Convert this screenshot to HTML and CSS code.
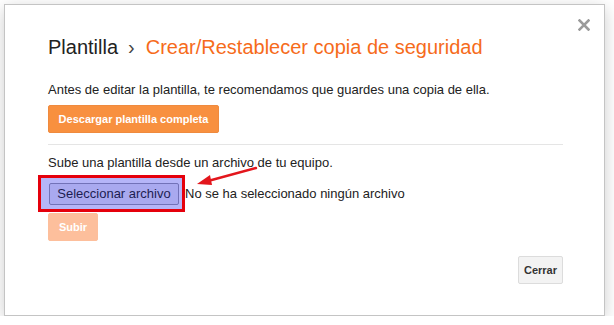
FILE: index.html
```html
<!DOCTYPE html>
<html lang="es">
<head>
    <meta charset="UTF-8">
    <title>Plantilla - Copia de seguridad</title>
    <link rel="stylesheet" href="styles.css">
</head>
<body>
    <div class="dialog">
        <svg class="close" width="12" height="12" viewBox="0 0 12 12">
            <path d="M1.5 1.5 L10.5 10.5 M10.5 1.5 L1.5 10.5" stroke="#9a9a9a" stroke-width="2.6" stroke-linecap="square"/>
        </svg>
        <h1 class="title">Plantilla<span class="sep">›</span><span class="current">Crear/Restablecer copia de seguridad</span></h1>
        <p class="text">Antes de editar la plantilla, te recomendamos que guardes una copia de ella.</p>
        <button class="btn btn-orange">Descargar plantilla completa</button>
        <hr class="divider">
        <p class="text">Sube una plantilla desde un archivo de tu equipo.</p>
        <div class="file-row">
            <div class="pick">
                <span class="pick-btn">Seleccionar archivo</span>
            </div>
            <span class="file-name">No se ha seleccionado ningún archivo</span>
        </div>
        <button class="btn btn-orange btn-disabled">Subir</button>
        <div class="footer">
            <button class="btn btn-grey">Cerrar</button>
        </div>
        <!-- annotation arrow -->
        <svg class="arrow" width="70" height="30" viewBox="0 0 70 30">
            <path d="M62 3 L14 16" stroke="#e3161c" stroke-width="2.4" stroke-linecap="round"/>
            <path d="M3 19 L16 10 L18 20 Z" fill="#e3161c"/>
        </svg>
    </div>
</body>
</html>
```

FILE: styles.css
```css
body {
    margin: 0;
    background-color: #ffffff;
    font-family: "Liberation Sans", Arial, sans-serif;
}
.dialog {
    position: relative;
    box-sizing: border-box;
    width: 601px;
    height: 312px;
    margin: 4px 0 0 4px;
    padding: 30px 41px 0 43px;
    background-color: white;
    border: 1px solid #c4c4c4;
    box-shadow: 0 4px 16px rgba(0, 0, 0, 0.2);
}
.close {
    position: absolute;
    top: 14px;
    right: 14px;
}
.title {
    margin: 0;
    font-size: 20px;
    font-weight: normal;
    line-height: 24px;
    color: #222;
}
.sep {
    margin: 0 11px 0 10px;
    color: #444;
}
.current {
    color: #f66b1b;
}
.text {
    margin: 22px 0 0;
    font-size: 13px;
    line-height: 18px;
    color: #222;
}
.btn {
    display: block;
    height: 28px;
    padding: 0;
    font-family: "Liberation Sans", Arial, sans-serif;
    font-size: 11px;
    font-weight: bold;
    white-space: nowrap;
    border-radius: 2px;
    cursor: pointer;
}
.btn-orange {
    margin-top: 6px;
    width: 171px;
    color: white;
    background-color: #f8903f;
    border: 1px solid #ef8a3e;
}
.btn-disabled {
    width: 50px;
    margin-top: 1px;
    background-color: #fdbf9c;
    border-color: #fdbf9c;
}
.btn-grey {
    width: 45px;
    color: #333;
    background-color: #f3f3f3;
    border: 1px solid #dcdcdc;
}
.divider {
    margin: 11px 0 0;
    border: 0;
    border-top: 1px solid #e5e5e5;
}
.divider + .text {
    margin-top: 9px;
}
.file-row {
    display: flex;
    align-items: center;
    margin-top: 3px;
    margin-left: -10px;
}
.pick {
    box-sizing: border-box;
    width: 147px;
    height: 37px;
    padding: 5px 3px 0 8px;
    background-color: #b5b5f8;
    border: 3px solid #e5000c;
}
.pick-btn {
    display: block;
    box-sizing: border-box;
    width: 130px;
    height: 22px;
    font-size: 13px;
    line-height: 20px;
    text-align: center;
    color: #1d1d52;
    background-color: #a9a9ef;
    border: 1px solid #7272b8;
    border-radius: 2px;
}
.file-name {
    font-size: 13px;
    color: #222;
}
.footer {
    display: flex;
    justify-content: flex-end;
    margin-top: 15px;
}
.arrow {
    position: absolute;
    left: 189px;
    top: 160px;
}
```
